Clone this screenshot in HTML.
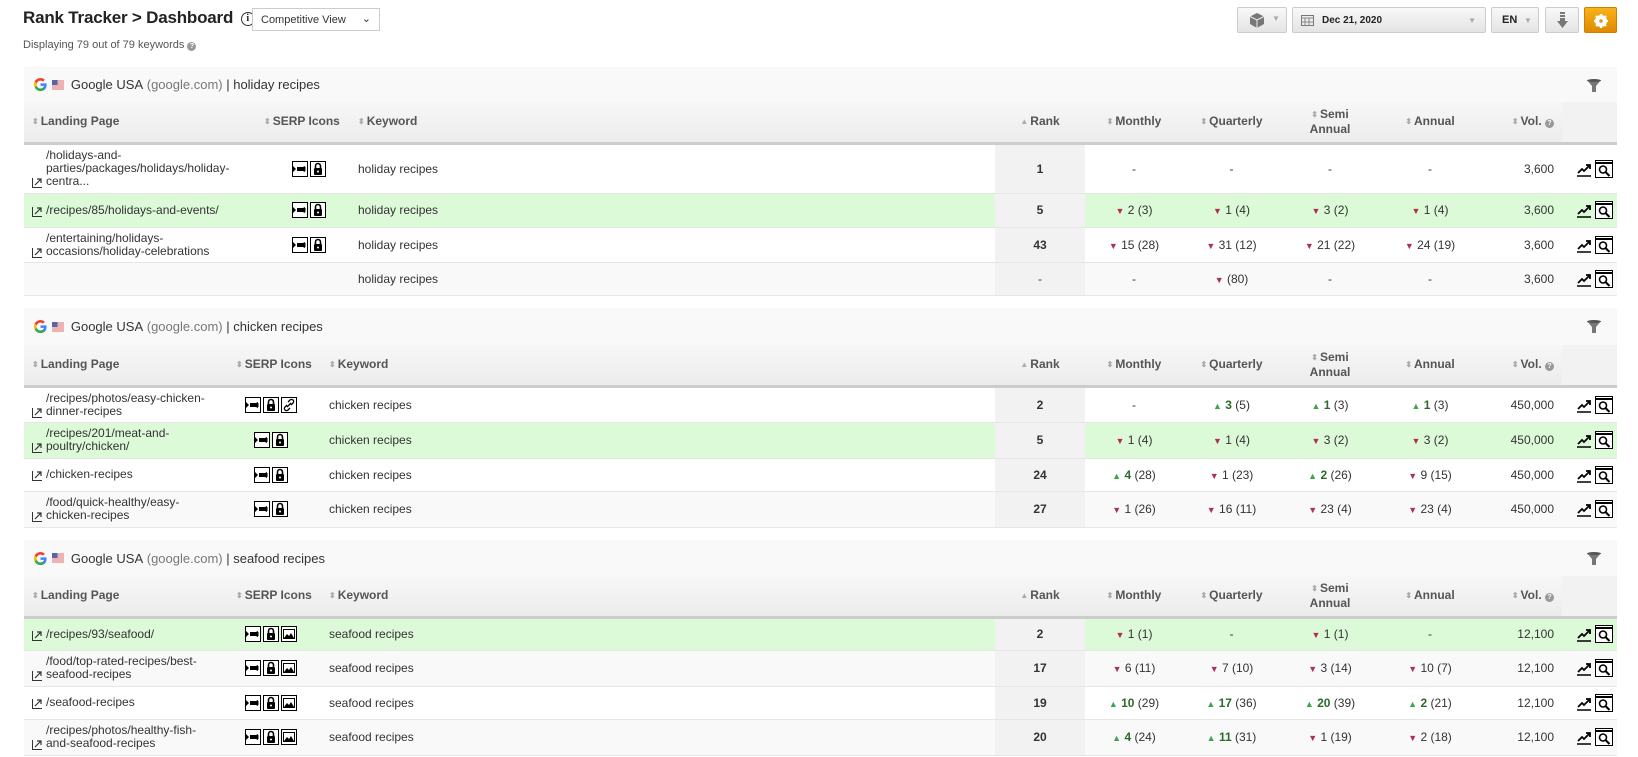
<!DOCTYPE html>
<html><head><meta charset="utf-8">
<style>
*{box-sizing:border-box;margin:0;padding:0}
body{width:1638px;height:757px;overflow:hidden;background:#fff;font-family:"Liberation Sans",Arial,sans-serif;color:#333;position:relative}
.abs{position:absolute}
.title{left:23px;top:8px;font-size:17px;font-weight:bold;color:#222;letter-spacing:-0.2px}
.info{display:inline-block;width:14px;height:14px;border:1.5px solid #333;border-radius:50%;font-size:10px;text-align:center;line-height:11px;font-weight:bold;vertical-align:2px;margin-left:3px;font-family:"Liberation Serif",serif}
.sel{left:252px;top:8px;width:128px;height:23px;border:1px solid #ccc;font-size:11px;color:#333;padding:5px 8px;background:#fff}
.sub{left:23px;top:39px;font-size:11px;color:#555}
.q{display:inline-block;width:9px;height:9px;border-radius:50%;background:#999;color:#fff;font-size:7px;text-align:center;line-height:9px;font-weight:bold;vertical-align:0}
.btn{top:7px;height:26px;border:1px solid #ccc;border-radius:2px;background:linear-gradient(#f8f8f8,#e4e4e4);font-size:11px;color:#222}
.sec{left:24px;width:1593px}
.sh{height:35px;background:#f9f9f9;font-size:13px;padding-left:9px;display:flex;align-items:center;color:#333}
.sh .gr{color:#777}
table{border-collapse:collapse;table-layout:fixed;width:1593px;font-size:12px}
thead td{background:linear-gradient(#f7f7f7,#ececec);font-weight:bold;color:#555;border-bottom:3px solid #ccc;height:41px;vertical-align:middle;line-height:15px}
tbody td{border-bottom:1px solid #e6e6e6;vertical-align:middle;color:#333}
tbody tr:nth-child(even) td{background:#f9f9f9}
tbody tr.g td{background:#dcf9d8}
td.rk{background:#f2f2f2 !important;text-align:center;font-weight:bold}
thead td.rk{background:linear-gradient(#f7f7f7,#ececec) !important;font-weight:bold}
.c{text-align:center}
.r{text-align:right;padding-right:8px}
.s{color:#aaa;font-size:8px;margin-right:2px;vertical-align:1px}
.lp{position:relative;padding-left:22px;line-height:13px}
.lp svg{position:absolute;left:8px;bottom:0}
.kw{padding-left:8px}
.hd{padding-left:8px}
.dn{color:#b03050;font-size:9px}
.up{color:#3aa84a;font-size:9px}
.gb{color:#2a6b2a;font-weight:bold}
.act{padding-left:14px}
.ic{display:inline-block;vertical-align:middle}
</style></head><body>

<div class="abs title">Rank Tracker &gt; Dashboard <span class="info">i</span></div>
<div class="abs sel">Competitive View<span style="position:absolute;right:8px;top:3px;font-size:11px">&#8964;</span></div>
<div class="abs sub">Displaying 79 out of 79 keywords <span class="q">?</span></div>

<div class="abs btn" style="left:1237px;width:50px"><svg class="abs" style="left:11px;top:5px" width="16" height="15" viewBox="0 0 16 15"><path d="M8 0L15 3.5V11L8 15L1 11V3.5Z" fill="#777"/><path d="M1 3.5L8 7L15 3.5M8 7V15" stroke="#eee" stroke-width="1" fill="none"/></svg><span class="abs" style="left:34px;top:6px;color:#aaa;font-size:8px">▼</span></div>
<div class="abs btn" style="left:1292px;width:194px"><svg class="abs" style="left:8px;top:7px" width="13" height="11"><rect x="0.5" y="0.5" width="12" height="10" fill="#eee" stroke="#777"/><path d="M0 3h13M4 3v8M8 3v8M0 7h13" stroke="#888"/></svg><span class="abs" style="left:29px;top:7px;font-weight:bold;font-size:10px">Dec 21, 2020</span><span class="abs" style="right:9px;top:8px;color:#aaa;font-size:8px">▼</span></div>
<div class="abs btn" style="left:1491px;width:48px"><span class="abs" style="left:10px;top:6px;font-weight:bold;font-size:11px">EN</span><span class="abs" style="left:32px;top:8px;color:#aaa;font-size:8px">▼</span></div>
<div class="abs btn" style="left:1545px;width:34px"><svg class="abs" style="left:11px;top:4px" width="11" height="17"><path d="M3 0h5v2H3zM3 3h5v2H3zM3 6h5v3h3L5.5 16 0 9h3z" fill="#777"/></svg></div>
<div class="abs btn" style="left:1584px;width:33px;background:linear-gradient(#f7b21c,#e08a00);border-color:#d08000"><svg class="abs" style="left:9px;top:6px" width="14" height="14" viewBox="0 0 14 14"><circle cx="7" cy="7" r="4.5" fill="none" stroke="#fff" stroke-width="3"/><path d="M7 0v14M0 7h14M2 2l10 10M12 2L2 12" stroke="#fff" stroke-width="2.2"/><circle cx="7" cy="7" r="1.8" fill="#e9960a"/></svg></div>

<!-- reusable svgs via inline -->
<svg width="0" height="0" style="position:absolute">
<defs>
<symbol id="lk" viewBox="0 0 11 11"><path d="M0.5 1v9.5H10" stroke="#333" fill="none"/><path d="M3 8L9 2M5 2h4v4" stroke="#333" fill="none" stroke-width="1.2"/></symbol>
<symbol id="vid" viewBox="0 0 16 16"><rect x="0.5" y="0.5" width="15" height="15" fill="#fff" stroke="#000"/><path d="M1 5l3 3-3 3zM5 6h6l2-1v6l-2-1H5z" fill="#000"/><path d="M13 6v4" stroke="#000"/></symbol>
<symbol id="lock" viewBox="0 0 16 16"><rect x="0.5" y="0.5" width="15" height="15" fill="#fff" stroke="#000"/><path d="M5.5 7V5a2.5 2.5 0 015 0v2" stroke="#000" stroke-width="1.6" fill="none"/><rect x="4" y="7" width="8" height="7" rx="1" fill="#000"/><circle cx="8" cy="10.5" r="1" fill="#fff"/></symbol>
<symbol id="chain" viewBox="0 0 16 16"><rect x="0.5" y="0.5" width="15" height="15" fill="#fff" stroke="#000"/><path d="M6 10L10 6M7 5l2-2a2 2 0 013 3l-2 2M9 11l-2 2a2 2 0 01-3-3l2-2" stroke="#000" stroke-width="1.3" fill="none"/></symbol>
<symbol id="img" viewBox="0 0 16 16"><rect x="0.5" y="0.5" width="15" height="15" fill="#fff" stroke="#000"/><rect x="2.5" y="3.5" width="11" height="9" fill="#fff" stroke="#000"/><path d="M3 12l3-4 2 2 2-3 3 5z" fill="#000"/></symbol>
<symbol id="tr" viewBox="0 0 16 16"><path d="M1 15h14" stroke="#000" stroke-width="1.5"/><path d="M2 12l4-4 2 2 5-5M10 4h4v4" stroke="#000" stroke-width="1.8" fill="none"/></symbol>
<symbol id="mg" viewBox="0 0 18 18"><rect x="0.5" y="0.5" width="17" height="17" fill="#fff" stroke="#000"/><path d="M0.5 3h17" stroke="#000" stroke-width="2"/><circle cx="8" cy="9.5" r="3.5" stroke="#000" stroke-width="1.6" fill="none"/><path d="M10.5 12l4 4" stroke="#000" stroke-width="2"/></symbol>
<symbol id="gg" viewBox="0 0 16 16"><path d="M14.5 8.2c0-.5 0-1-.1-1.4H8v2.7h3.7a3.3 3.3 0 01-1.4 2.1v1.8h2.3c1.3-1.2 1.9-3 1.9-5.2z" fill="#4285f4"/><path d="M8 15c1.9 0 3.5-.6 4.6-1.7l-2.3-1.8c-.6.4-1.4.7-2.3.7-1.8 0-3.3-1.2-3.9-2.8H1.8v1.8A7 7 0 008 15z" fill="#34a853"/><path d="M4.1 9.4a4.2 4.2 0 010-2.8V4.8H1.8a7 7 0 000 6.4z" fill="#fbbc05"/><path d="M8 3.8c1 0 2 .4 2.7 1.1l2-2A7 7 0 001.8 4.8l2.3 1.8C4.7 5 6.2 3.8 8 3.8z" fill="#ea4335"/></symbol>
<symbol id="fl" viewBox="0 0 12 10"><rect width="12" height="10" fill="#fff"/><path d="M0 1h12M0 3h12M0 5h12M0 7h12M0 9h12" stroke="#d66" stroke-width="1"/><rect width="5.5" height="5" fill="#56a"/></symbol>
<symbol id="flt" viewBox="0 0 14 14"><path d="M0 1h14L9 7v6H5V7z" fill="#777"/><ellipse cx="7" cy="1.5" rx="7" ry="1.5" fill="#555"/></symbol>
</defs></svg>

<!-- SECTION 1 -->
<div class="abs sec" style="top:67px">
<div class="sh"><svg width="15" height="15"><use href="#gg"/></svg>&nbsp;<svg width="12" height="10"><use href="#fl"/></svg>&nbsp;&nbsp;Google USA&nbsp;<span class="gr">(google.com)</span>&nbsp;|&nbsp;holiday recipes<svg class="abs" style="right:16px;top:12px" width="14" height="14"><use href="#flt"/></svg></div>
<table>
<colgroup><col style="width:234px"><col style="width:92px"><col style="width:645px"><col style="width:90px"><col style="width:98px"><col style="width:97px"><col style="width:100px"><col style="width:100px"><col style="width:82px"><col style="width:55px"></colgroup>
<thead><tr><td class="hd"><span class="s">⬍</span>Landing Page</td><td class="hd" style="padding-left:6px"><span class="s">⬍</span>SERP Icons</td><td class="hd"><span class="s">⬍</span>Keyword</td><td class="rk c"><span class="s">▲</span>Rank</td><td class="c"><span class="s">⬍</span>Monthly</td><td class="c"><span class="s">⬍</span>Quarterly</td><td class="c"><span class="s">⬍</span>Semi<br>Annual</td><td class="c"><span class="s">⬍</span>Annual</td><td class="r"><span class="s">⬍</span>Vol. <span class="q">?</span></td><td style="background:#f2f2f2"></td></tr></thead>
<tbody>
<tr style="height:50px"><td><div class="lp">/holidays-and-<br>parties/packages/holidays/holiday-<br>centra...<svg width="11" height="11"><use href="#lk"/></svg></div></td><td class="c" style="padding-left:10px"><svg class="ic" width="16" height="16"><use href="#vid"/></svg><svg class="ic" width="16" height="16" style="margin-left:2px"><use href="#lock"/></svg></td><td class="kw">holiday recipes</td><td class="rk">1</td><td class="c">-</td><td class="c">-</td><td class="c">-</td><td class="c">-</td><td class="r">3,600</td><td class="act"><svg class="ic" width="16" height="16"><use href="#tr"/></svg> <svg class="ic" width="18" height="18"><use href="#mg"/></svg></td></tr>
<tr class="g" style="height:34px"><td><div class="lp">/recipes/85/holidays-and-events/<svg width="11" height="11"><use href="#lk"/></svg></div></td><td class="c" style="padding-left:10px"><svg class="ic" width="16" height="16"><use href="#vid"/></svg><svg class="ic" width="16" height="16" style="margin-left:2px"><use href="#lock"/></svg></td><td class="kw">holiday recipes</td><td class="rk">5</td><td class="c"><span class="dn">▼</span> 2 (3)</td><td class="c"><span class="dn">▼</span> 1 (4)</td><td class="c"><span class="dn">▼</span> 3 (2)</td><td class="c"><span class="dn">▼</span> 1 (4)</td><td class="r">3,600</td><td class="act"><svg class="ic" width="16" height="16"><use href="#tr"/></svg> <svg class="ic" width="18" height="18"><use href="#mg"/></svg></td></tr>
<tr style="height:35px"><td><div class="lp">/entertaining/holidays-<br>occasions/holiday-celebrations<svg width="11" height="11"><use href="#lk"/></svg></div></td><td class="c" style="padding-left:10px"><svg class="ic" width="16" height="16"><use href="#vid"/></svg><svg class="ic" width="16" height="16" style="margin-left:2px"><use href="#lock"/></svg></td><td class="kw">holiday recipes</td><td class="rk">43</td><td class="c"><span class="dn">▼</span> 15 (28)</td><td class="c"><span class="dn">▼</span> 31 (12)</td><td class="c"><span class="dn">▼</span> 21 (22)</td><td class="c"><span class="dn">▼</span> 24 (19)</td><td class="r">3,600</td><td class="act"><svg class="ic" width="16" height="16"><use href="#tr"/></svg> <svg class="ic" width="18" height="18"><use href="#mg"/></svg></td></tr>
<tr style="height:33px"><td></td><td></td><td class="kw">holiday recipes</td><td class="rk" style="font-weight:normal">-</td><td class="c">-</td><td class="c"><span class="dn">▼</span> (80)</td><td class="c">-</td><td class="c">-</td><td class="r">3,600</td><td class="act"><svg class="ic" width="16" height="16"><use href="#tr"/></svg> <svg class="ic" width="18" height="18"><use href="#mg"/></svg></td></tr>
</tbody></table></div>

<!-- SECTION 2 -->
<div class="abs sec" style="top:308px">
<div class="sh" style="height:37px"><svg width="15" height="15"><use href="#gg"/></svg>&nbsp;<svg width="12" height="10"><use href="#fl"/></svg>&nbsp;&nbsp;Google USA&nbsp;<span class="gr">(google.com)</span>&nbsp;|&nbsp;chicken recipes<svg class="abs" style="right:16px;top:12px" width="14" height="14"><use href="#flt"/></svg></div>
<table>
<colgroup><col style="width:206px"><col style="width:91px"><col style="width:674px"><col style="width:90px"><col style="width:98px"><col style="width:97px"><col style="width:100px"><col style="width:100px"><col style="width:82px"><col style="width:55px"></colgroup>
<thead><tr><td class="hd"><span class="s">⬍</span>Landing Page</td><td class="hd" style="padding-left:6px"><span class="s">⬍</span>SERP Icons</td><td class="hd"><span class="s">⬍</span>Keyword</td><td class="rk c"><span class="s">▲</span>Rank</td><td class="c"><span class="s">⬍</span>Monthly</td><td class="c"><span class="s">⬍</span>Quarterly</td><td class="c"><span class="s">⬍</span>Semi<br>Annual</td><td class="c"><span class="s">⬍</span>Annual</td><td class="r"><span class="s">⬍</span>Vol. <span class="q">?</span></td><td style="background:#f2f2f2"></td></tr></thead>
<tbody>
<tr style="height:36px"><td><div class="lp">/recipes/photos/easy-chicken-<br>dinner-recipes<svg width="11" height="11"><use href="#lk"/></svg></div></td><td class="c" style="padding-right:10px"><svg class="ic" width="16" height="16"><use href="#vid"/></svg><svg class="ic" width="16" height="16" style="margin-left:2px"><use href="#lock"/></svg><svg class="ic" width="16" height="16" style="margin-left:2px"><use href="#chain"/></svg></td><td class="kw">chicken recipes</td><td class="rk">2</td><td class="c">-</td><td class="c"><span class="up">▲</span> <span class="gb">3</span> (5)</td><td class="c"><span class="up">▲</span> <span class="gb">1</span> (3)</td><td class="c"><span class="up">▲</span> <span class="gb">1</span> (3)</td><td class="r">450,000</td><td class="act"><svg class="ic" width="16" height="16"><use href="#tr"/></svg> <svg class="ic" width="18" height="18"><use href="#mg"/></svg></td></tr>
<tr class="g" style="height:36px"><td><div class="lp">/recipes/201/meat-and-<br>poultry/chicken/<svg width="11" height="11"><use href="#lk"/></svg></div></td><td class="c" style="padding-right:10px"><svg class="ic" width="16" height="16"><use href="#vid"/></svg><svg class="ic" width="16" height="16" style="margin-left:2px"><use href="#lock"/></svg></td><td class="kw">chicken recipes</td><td class="rk">5</td><td class="c"><span class="dn">▼</span> 1 (4)</td><td class="c"><span class="dn">▼</span> 1 (4)</td><td class="c"><span class="dn">▼</span> 3 (2)</td><td class="c"><span class="dn">▼</span> 3 (2)</td><td class="r">450,000</td><td class="act"><svg class="ic" width="16" height="16"><use href="#tr"/></svg> <svg class="ic" width="18" height="18"><use href="#mg"/></svg></td></tr>
<tr style="height:33px"><td><div class="lp">/chicken-recipes<svg width="11" height="11"><use href="#lk"/></svg></div></td><td class="c" style="padding-right:10px"><svg class="ic" width="16" height="16"><use href="#vid"/></svg><svg class="ic" width="16" height="16" style="margin-left:2px"><use href="#lock"/></svg></td><td class="kw">chicken recipes</td><td class="rk">24</td><td class="c"><span class="up">▲</span> <span class="gb">4</span> (28)</td><td class="c"><span class="dn">▼</span> 1 (23)</td><td class="c"><span class="up">▲</span> <span class="gb">2</span> (26)</td><td class="c"><span class="dn">▼</span> 9 (15)</td><td class="r">450,000</td><td class="act"><svg class="ic" width="16" height="16"><use href="#tr"/></svg> <svg class="ic" width="18" height="18"><use href="#mg"/></svg></td></tr>
<tr style="height:36px"><td><div class="lp">/food/quick-healthy/easy-<br>chicken-recipes<svg width="11" height="11"><use href="#lk"/></svg></div></td><td class="c" style="padding-right:10px"><svg class="ic" width="16" height="16"><use href="#vid"/></svg><svg class="ic" width="16" height="16" style="margin-left:2px"><use href="#lock"/></svg></td><td class="kw">chicken recipes</td><td class="rk">27</td><td class="c"><span class="dn">▼</span> 1 (26)</td><td class="c"><span class="dn">▼</span> 16 (11)</td><td class="c"><span class="dn">▼</span> 23 (4)</td><td class="c"><span class="dn">▼</span> 23 (4)</td><td class="r">450,000</td><td class="act"><svg class="ic" width="16" height="16"><use href="#tr"/></svg> <svg class="ic" width="18" height="18"><use href="#mg"/></svg></td></tr>
</tbody></table></div>

<!-- SECTION 3 -->
<div class="abs sec" style="top:540px">
<div class="sh" style="height:36px"><svg width="15" height="15"><use href="#gg"/></svg>&nbsp;<svg width="12" height="10"><use href="#fl"/></svg>&nbsp;&nbsp;Google USA&nbsp;<span class="gr">(google.com)</span>&nbsp;|&nbsp;seafood recipes<svg class="abs" style="right:16px;top:12px" width="14" height="14"><use href="#flt"/></svg></div>
<table>
<colgroup><col style="width:206px"><col style="width:91px"><col style="width:674px"><col style="width:90px"><col style="width:98px"><col style="width:97px"><col style="width:100px"><col style="width:100px"><col style="width:82px"><col style="width:55px"></colgroup>
<thead><tr><td class="hd"><span class="s">⬍</span>Landing Page</td><td class="hd" style="padding-left:6px"><span class="s">⬍</span>SERP Icons</td><td class="hd"><span class="s">⬍</span>Keyword</td><td class="rk c"><span class="s">▲</span>Rank</td><td class="c"><span class="s">⬍</span>Monthly</td><td class="c"><span class="s">⬍</span>Quarterly</td><td class="c"><span class="s">⬍</span>Semi<br>Annual</td><td class="c"><span class="s">⬍</span>Annual</td><td class="r"><span class="s">⬍</span>Vol. <span class="q">?</span></td><td style="background:#f2f2f2"></td></tr></thead>
<tbody>
<tr class="g" style="height:33px"><td><div class="lp">/recipes/93/seafood/<svg width="11" height="11"><use href="#lk"/></svg></div></td><td class="c" style="padding-right:10px"><svg class="ic" width="16" height="16"><use href="#vid"/></svg><svg class="ic" width="16" height="16" style="margin-left:2px"><use href="#lock"/></svg><svg class="ic" width="16" height="16" style="margin-left:2px"><use href="#img"/></svg></td><td class="kw">seafood recipes</td><td class="rk">2</td><td class="c"><span class="dn">▼</span> 1 (1)</td><td class="c">-</td><td class="c"><span class="dn">▼</span> 1 (1)</td><td class="c">-</td><td class="r">12,100</td><td class="act"><svg class="ic" width="16" height="16"><use href="#tr"/></svg> <svg class="ic" width="18" height="18"><use href="#mg"/></svg></td></tr>
<tr style="height:36px"><td><div class="lp">/food/top-rated-recipes/best-<br>seafood-recipes<svg width="11" height="11"><use href="#lk"/></svg></div></td><td class="c" style="padding-right:10px"><svg class="ic" width="16" height="16"><use href="#vid"/></svg><svg class="ic" width="16" height="16" style="margin-left:2px"><use href="#lock"/></svg><svg class="ic" width="16" height="16" style="margin-left:2px"><use href="#img"/></svg></td><td class="kw">seafood recipes</td><td class="rk">17</td><td class="c"><span class="dn">▼</span> 6 (11)</td><td class="c"><span class="dn">▼</span> 7 (10)</td><td class="c"><span class="dn">▼</span> 3 (14)</td><td class="c"><span class="dn">▼</span> 10 (7)</td><td class="r">12,100</td><td class="act"><svg class="ic" width="16" height="16"><use href="#tr"/></svg> <svg class="ic" width="18" height="18"><use href="#mg"/></svg></td></tr>
<tr style="height:33px"><td><div class="lp">/seafood-recipes<svg width="11" height="11"><use href="#lk"/></svg></div></td><td class="c" style="padding-right:10px"><svg class="ic" width="16" height="16"><use href="#vid"/></svg><svg class="ic" width="16" height="16" style="margin-left:2px"><use href="#lock"/></svg><svg class="ic" width="16" height="16" style="margin-left:2px"><use href="#img"/></svg></td><td class="kw">seafood recipes</td><td class="rk">19</td><td class="c"><span class="up">▲</span> <span class="gb">10</span> (29)</td><td class="c"><span class="up">▲</span> <span class="gb">17</span> (36)</td><td class="c"><span class="up">▲</span> <span class="gb">20</span> (39)</td><td class="c"><span class="up">▲</span> <span class="gb">2</span> (21)</td><td class="r">12,100</td><td class="act"><svg class="ic" width="16" height="16"><use href="#tr"/></svg> <svg class="ic" width="18" height="18"><use href="#mg"/></svg></td></tr>
<tr style="height:36px"><td><div class="lp">/recipes/photos/healthy-fish-<br>and-seafood-recipes<svg width="11" height="11"><use href="#lk"/></svg></div></td><td class="c" style="padding-right:10px"><svg class="ic" width="16" height="16"><use href="#vid"/></svg><svg class="ic" width="16" height="16" style="margin-left:2px"><use href="#lock"/></svg><svg class="ic" width="16" height="16" style="margin-left:2px"><use href="#img"/></svg></td><td class="kw">seafood recipes</td><td class="rk">20</td><td class="c"><span class="up">▲</span> <span class="gb">4</span> (24)</td><td class="c"><span class="up">▲</span> <span class="gb">11</span> (31)</td><td class="c"><span class="dn">▼</span> 1 (19)</td><td class="c"><span class="dn">▼</span> 2 (18)</td><td class="r">12,100</td><td class="act"><svg class="ic" width="16" height="16"><use href="#tr"/></svg> <svg class="ic" width="18" height="18"><use href="#mg"/></svg></td></tr>
</tbody></table></div>

</body></html>
